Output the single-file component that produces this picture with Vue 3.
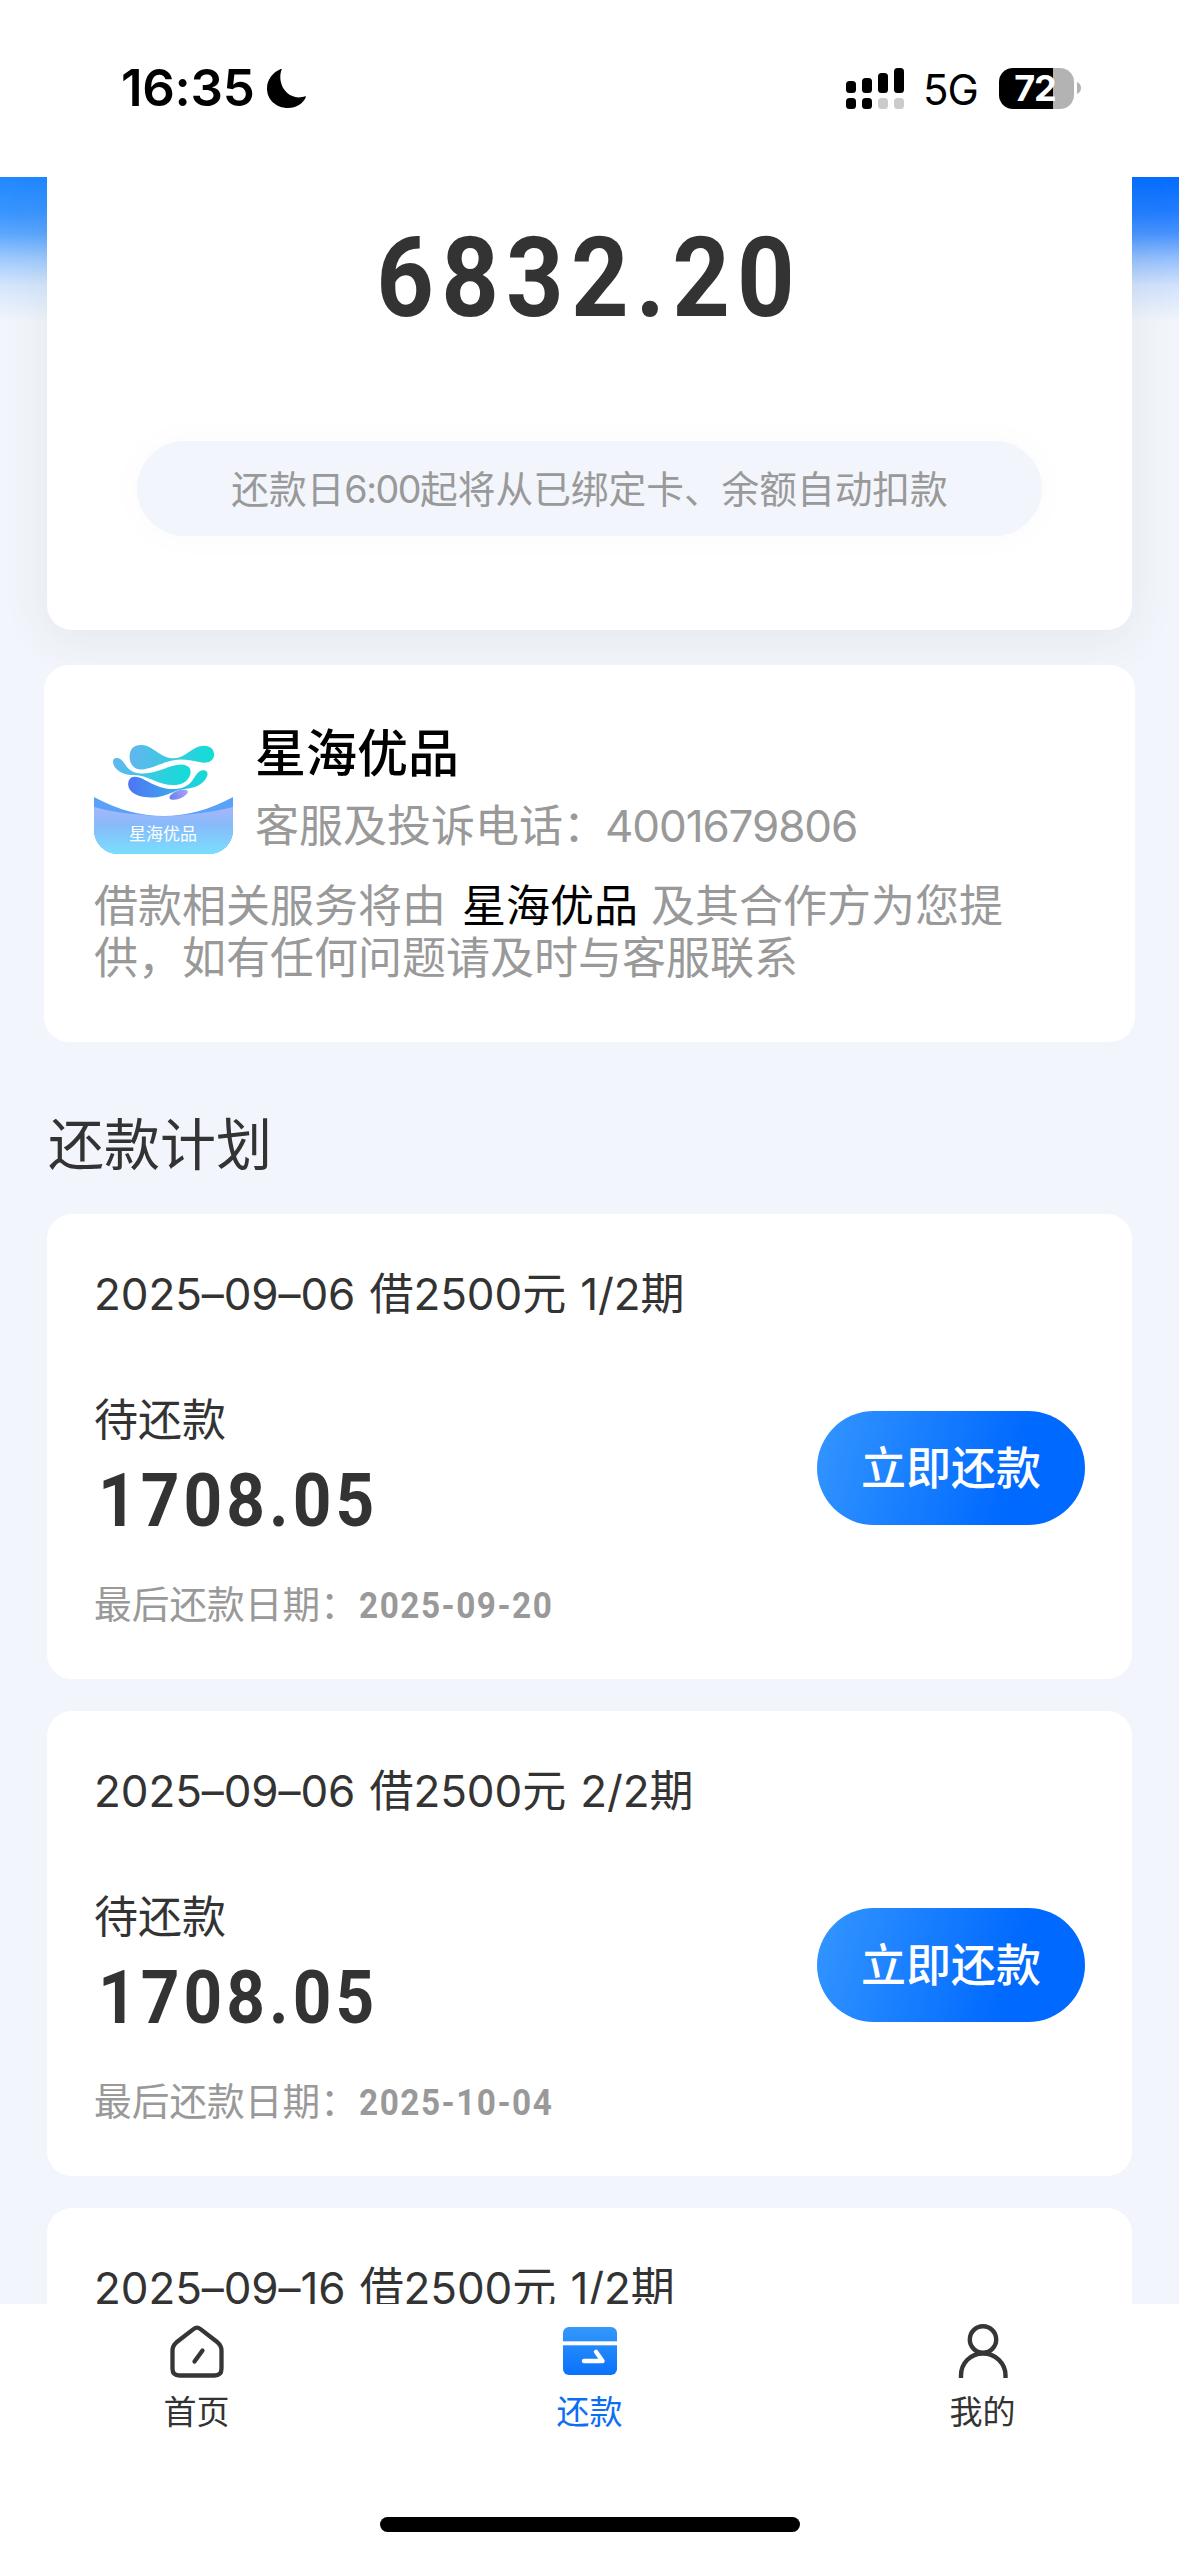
<script setup>
const plans = [
  { title: '2025–09–06 借2500元 1/2期', amount: '1708.05', due: '2025-09-20' },
  { title: '2025–09–06 借2500元 2/2期', amount: '1708.05', due: '2025-10-04' },
  { title: '2025–09–16 借2500元 1/2期' },
]
</script>

<template>
  <div class="screen">
    <header class="status">
      <div class="status-left">
        <span class="time">16:35</span>
        <svg class="moon" viewBox="0 0 39 39">
          <path d="M14.8 0.3C13.2 4 13 8.5 13.7 12.3C15.3 21.5 23 28.3 31.5 28.4C34 28.4 36.4 27.9 38.2 27.3C38.8 27.1 39.1 27.5 38.9 28C36 34.8 29.3 39 21 39C9 39 0 30.5 0 19.5C0 10.500 6 3.300 13.800 0.100C14.500 -0.100 15 -0.100 14.800 0.300Z" fill="#000" />
        </svg>
      </div>
      <div class="status-right">
        <svg class="signal" viewBox="0 0 58 41">
          <g fill="#000">
            <rect x="0" y="13" width="10" height="12" rx="3.500" />
            <rect x="16" y="10" width="10" height="15" rx="3.500" />
            <rect x="32" y="5" width="10" height="20" rx="3.500" />
            <rect x="48" y="0" width="10" height="25" rx="3.500" />
            <rect x="0" y="30" width="10" height="11" rx="3.500" />
            <rect x="16" y="30" width="10" height="11" rx="3.500" />
          </g>
          <g fill="#cbcbcb">
            <rect x="32" y="30" width="10" height="11" rx="3.500" />
            <rect x="48" y="30" width="10" height="11" rx="3.500" />
          </g>
        </svg>
        <span class="network">5G</span>
        <div class="battery"><span>72</span></div>
        <svg class="nub" viewBox="0 0 4 12"><path d="M0 0C2.500 1 4 3 4 6S2.500 11 0 12Z" fill="#b3b3b3" /></svg>
      </div>
    </header>

    <main class="content">
      <section class="summary">
        <div class="total"><span>6832.20</span></div>
        <div class="notice">还款日<span>6:00</span>起将从已绑定卡、余额自动扣款</div>
      </section>

      <section class="provider">
        <div class="provider-head">
          <svg class="logo" viewBox="0 0 139 139">
            <defs>
              <linearGradient id="aqua" x1="0" y1="0" x2="1" y2="0">
                <stop offset="0" stop-color="#62b6ee" />
                <stop offset="0.600" stop-color="#2fcfe0" />
                <stop offset="1" stop-color="#12ddd6" />
              </linearGradient>
              <linearGradient id="deep" x1="0" y1="0" x2="1" y2="0">
                <stop offset="0" stop-color="#4f74f6" />
                <stop offset="0.500" stop-color="#3f9fee" />
                <stop offset="0.800" stop-color="#1fd0de" />
                <stop offset="1" stop-color="#17d9d6" />
              </linearGradient>
              <linearGradient id="sea" x1="0" y1="0" x2="0" y2="1">
                <stop offset="0" stop-color="#a6b6fa" />
                <stop offset="0.400" stop-color="#86bbfa" />
                <stop offset="1" stop-color="#7adefd" />
              </linearGradient>
              <linearGradient id="violet" x1="0" y1="0" x2="1" y2="0">
                <stop offset="0" stop-color="#6a7df5" />
                <stop offset="1" stop-color="#a9a4f8" />
              </linearGradient>
              <clipPath id="tile"><rect width="139" height="139" rx="24" /></clipPath>
            </defs>
            <g clip-path="url(#tile)">
              <rect width="139" height="139" fill="#fff" />
              <path d="M0 82Q69.500 120 139 82V139H0Z" fill="#5aa2f8" />
              <path d="M0 92Q22 98 45 99.500Q69.500 103 95 99.500Q120 97 139 92V139H0Z" fill="url(#sea)" />
            </g>
            <path d="M35.600 42C35.500 34 40 29.500 48 30C60 31 66 43.500 80 43.300C92 43 98 31 110 30.700C117 30.700 120.500 35 120 40.500C119.500 46 114 48.500 108 47.500C101 46.300 94 44.500 86 44.500C72 44.500 60 54 47 54.500C40 54.500 35.700 49 35.600 42Z" fill="url(#aqua)" />
            <path d="M19 46.500C19 42.500 24 42 27.500 45C31.500 48.500 33 56 43 58C62 61 74 49.500 87 49.600C93 49.700 96.800 52.500 96.600 57C96.200 64 90 69.500 82 70C64 71 54 59.500 39 60C27 60.500 19 53 19 46.500Z" fill="url(#aqua)" />
            <path d="M34.200 70C34 65 36.500 61.700 41 61.800C50 62 57 71 72 73.500C84 75.500 93 72.500 98 66C102 60.500 104 55.500 109 55.300C113 55.300 114.500 58 113 61.500C110 68.500 102 73 92 73.800C80 75 72 82.500 58 82.500C45 82.500 34.600 78 34.200 70Z" fill="url(#deep)" />
            <ellipse cx="84.600" cy="79.700" rx="9.800" ry="4" transform="rotate(-21 84.600 79.700)" fill="url(#violet)" />
            <text x="69" y="125" text-anchor="middle" class="logo-text">星海优品</text>
          </svg>
          <div class="provider-info">
            <div class="provider-name">星海优品</div>
            <div class="provider-phone">客服及投诉电话：<span>4001679806</span></div>
          </div>
        </div>
        <p class="provider-text">借款相关服务将由<b>星海优品</b>及其合作方为您提<br>供，如有任何问题请及时与客服联系</p>
      </section>

      <h2 class="heading">还款计划</h2>

      <section v-for="plan in plans" :key="plan.title" class="plan">
        <div class="plan-title">{{ plan.title }}</div>
        <template v-if="plan.amount">
          <div class="plan-row">
            <div>
              <div class="plan-label">待还款</div>
              <div class="plan-amount"><span>{{ plan.amount }}</span></div>
            </div>
            <button class="pay" type="button">立即还款</button>
          </div>
          <div class="plan-due">最后还款日期：<span>{{ plan.due }}</span></div>
        </template>
      </section>
    </main>

    <footer class="footer">
      <nav class="tabs">
        <a class="tab">
          <svg class="tab-icon" viewBox="0 0 60 60">
            <g fill="none" stroke="#363636" stroke-linecap="round" stroke-linejoin="round">
              <path d="M26.800 6.900Q30 4.300 33.200 6.900L50.500 20.300Q54.500 23.600 54.500 28.500V46.500Q54.500 53.500 47.500 53.500H12.500Q5.500 53.500 5.500 46.500V28.500Q5.500 23.600 9.500 20.300Z" stroke-width="4.300" />
              <path d="M35.500 28.500L27.500 39.500" stroke-width="4.300" />
            </g>
          </svg>
          <span>首页</span>
        </a>
        <a class="tab active">
          <svg class="tab-icon" viewBox="0 0 60 60">
            <defs>
              <linearGradient id="wallet" x1="0" y1="0" x2="0" y2="1">
                <stop offset="0" stop-color="#3499fb" />
                <stop offset="1" stop-color="#0a71fd" />
              </linearGradient>
            </defs>
            <rect x="3" y="5" width="54" height="48" rx="6" fill="url(#wallet)" />
            <rect x="3" y="19.300" width="54" height="4" fill="#fff" />
            <path d="M24 39H42.500L36 29.800" fill="none" stroke="#fff" stroke-width="4.400" stroke-linecap="round" stroke-linejoin="round" />
          </svg>
          <span>还款</span>
        </a>
        <a class="tab">
          <svg class="tab-icon" viewBox="0 0 60 60">
            <g fill="none" stroke="#363636" stroke-width="4.400">
              <circle cx="30" cy="17.500" r="13.200" />
              <path d="M8 56V53.500C8 41 17.700 31.500 30 31.500S52.500 41 52.500 53.500V56" />
            </g>
          </svg>
          <span>我的</span>
        </a>
      </nav>
      <div class="indicator"></div>
    </footer>
  </div>
</template>

<style>
html,
body {
  margin: 0;
  background: #fff;
}
</style>

<style scoped>
.screen {
  width: 1179px;
  height: 2556px;
  display: flex;
  flex-direction: column;
  overflow: hidden;
  background: #fff;
  color: #333;
  font-family: Inter, "Noto Sans CJK SC", sans-serif;
}

/* status bar */
.status {
  flex: none;
  height: 177px;
  box-sizing: border-box;
  padding: 58px 98px 0 121px;
  display: flex;
  justify-content: space-between;
  align-items: flex-start;
  color: #000;
}
.status-left,
.status-right {
  display: flex;
  align-items: center;
  height: 60px;
}
.time {
  font-size: 51px;
  font-weight: 600;
  line-height: 60px;
  letter-spacing: -0.3px;
}
.moon {
  width: 39px;
  height: 39px;
  margin-left: 13px;
}
.signal {
  width: 58px;
  height: 41px;
}
.network {
  width: 54px;
  margin: 3px 22px 0 19px;
  font-size: 42px;
  line-height: 60px;
  letter-spacing: -1px;
  white-space: nowrap;
}
.battery {
  width: 75px;
  height: 41px;
  border-radius: 14px;
  background: linear-gradient(90deg, #000 54px, #b3b3b3 54px);
  color: #fff;
  font-size: 36px;
  font-weight: 700;
  line-height: 41px;
  text-align: center;
  text-indent: -3px;
  letter-spacing: -1px;
}
.nub {
  width: 4px;
  height: 12px;
  margin-left: 3px;
}

/* scroll area */
.content {
  flex: none;
  height: 2127px;
  overflow: hidden;
  background:
    linear-gradient(180deg, rgba(242, 245, 251, 0) 0, rgba(242, 245, 251, 0.120) 35px, rgba(242, 245, 251, 0.280) 56px, rgba(242, 245, 251, 0.620) 83px, rgba(242, 245, 251, 0.860) 108px, #f2f5fb 145px) 0 0 / 100% 146px no-repeat,
    linear-gradient(90deg, #2088ff, #046cff) 0 0 / 100% 145px no-repeat,
    #f2f5fb;
}
.summary {
  height: 453px;
  margin: 0 47px;
  box-sizing: border-box;
  padding-top: 39px;
  border-radius: 0 0 25px 25px;
  background: #fff;
  box-shadow: 0 8px 48px rgba(60, 90, 80, 0.080);
  text-align: center;
}
.total {
  height: 120px;
  line-height: 124px;
  font-family: Roboto, "Noto Sans", sans-serif;
  font-size: 111px;
  font-weight: 700;
  letter-spacing: 8px;
}
.total span {
  display: inline-block;
  transform: scaleX(0.905);
}
.notice {
  width: 905px;
  height: 95px;
  margin: 105px auto 0;
  border-radius: 48px;
  background: #f2f5fb;
  box-shadow: 0 0 40px rgba(0, 0, 0, 0.024);
  color: #999;
  font-size: 37.700px;
  line-height: 97px;
}
.notice span {
  letter-spacing: -1.500px;
}

.provider {
  height: 377px;
  margin: 35px 44px 0;
  box-sizing: border-box;
  padding: 50px 50px 0;
  border-radius: 25px;
  background: #fff;
}
.provider-head {
  display: flex;
}
.logo {
  width: 139px;
  height: 139px;
  flex: none;
}
.logo-text {
  font-family: "Noto Sans CJK SC", sans-serif;
  font-size: 17px;
  fill: #fff;
}
.provider-info {
  margin-left: 22px;
}
.provider-name {
  margin-top: 3px;
  font-size: 51px;
  line-height: 72px;
  font-weight: 500;
  color: #000;
}
.provider-phone {
  font-size: 44px;
  line-height: 72px;
  color: #999;
}
.provider-phone span {
  margin-left: -2px;
  letter-spacing: -1.100px;
}
.provider-text {
  margin: 19px 0 0;
  font-size: 44px;
  line-height: 51.500px;
  color: #999;
}
.provider-text b {
  margin: 0 13px 0 16px;
  font-weight: 400;
  color: #000;
}

.heading {
  margin: 66px 0 31px 48px;
  height: 75px;
  font-size: 56px;
  font-weight: 400;
  line-height: 75px;
}

.plan {
  height: 465px;
  margin: 0 47px 32px;
  box-sizing: border-box;
  padding: 47px 47px 0;
  border-radius: 25px;
  background: #fff;
}
.plan-title {
  font-size: 44px;
  line-height: 67px;
  height: 66px;
  letter-spacing: -0.100px;
  word-spacing: 2px;
}
.plan-row {
  display: flex;
  justify-content: space-between;
  box-sizing: border-box;
  height: 252px;
  padding-top: 63px;
}
.plan-label {
  font-size: 44px;
  line-height: 61px;
}
.plan-amount {
  margin: 2px 0 0 4px;
  font-family: Roboto, "Noto Sans", sans-serif;
  font-size: 75px;
  font-weight: 700;
  line-height: 95px;
  letter-spacing: 4.500px;
}
.plan-amount span,
.plan-due span {
  display: inline-block;
  transform: scaleX(0.9);
  transform-origin: 0 50%;
}
.pay {
  width: 268px;
  height: 114px;
  margin: 21px 0 0;
  padding: 0;
  border: 0;
  border-radius: 57px;
  background: linear-gradient(107deg, #3496ff 0%, #0069ff 72%, #0069ff 100%);
  color: #fff;
  font-family: inherit;
  font-size: 45px;
  font-weight: 500;
  line-height: 116px;
}
.plan-due {
  color: #999;
  font-size: 37.700px;
  line-height: 50px;
}
.plan-due span {
  margin-left: 1px;
  font-family: Roboto, "Noto Sans", sans-serif;
  font-size: 37px;
  font-weight: 700;
  letter-spacing: 1.700px;
}

/* tab bar */
.footer {
  flex: none;
  height: 252px;
  background: #fff;
}
.tabs {
  display: flex;
  height: 213px;
}
.tab {
  flex: 1;
  display: flex;
  flex-direction: column;
  align-items: center;
  padding-top: 18px;
  font-size: 33px;
  line-height: 44px;
}
.tab-icon {
  width: 60px;
  height: 60px;
  margin-bottom: 8px;
}
.active {
  color: #0d6ef5;
}
.indicator {
  width: 420px;
  height: 15px;
  margin: 0 auto;
  border-radius: 8px;
  background: #000;
}
</style>
